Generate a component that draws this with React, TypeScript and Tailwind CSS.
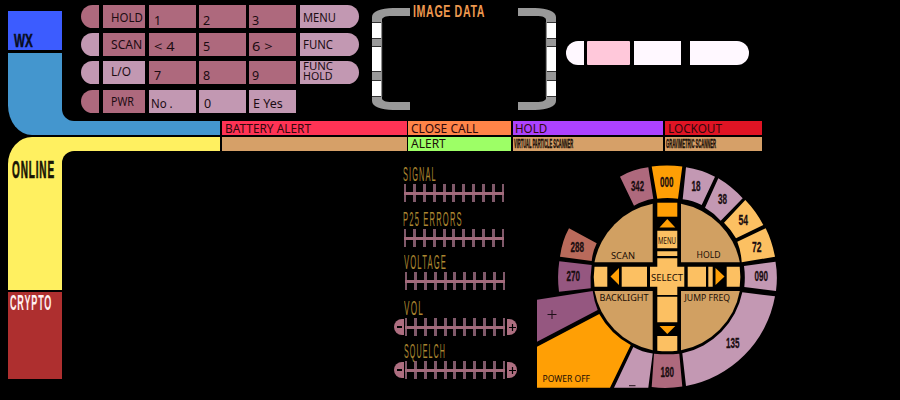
import { useLayoutEffect, useRef, useState } from "react";

const SANS = "font-['Noto_Sans','Open_Sans',sans-serif]";
const NARROW = "font-['Liberation_Sans',Arial,sans-serif]";

// Single line of text squeezed or stretched to a given width.
function Fit({ text, w, className = "" }: { text: string; w: number; className?: string }) {
  const ref = useRef<HTMLSpanElement>(null);
  const [scale, setScale] = useState(1);
  useLayoutEffect(() => {
    if (ref.current) setScale(w / ref.current.offsetWidth);
  }, [w, text]);
  return (
    <span
      ref={ref}
      className={`block w-max origin-left whitespace-pre leading-none ${className}`}
      style={{ transform: `scaleX(${scale})` }}
    >
      {text}
    </span>
  );
}

type Key = { t: string; w: number; pad: string; light?: boolean };
type Row = { h: string; cap: string; label: Key; labelPad: string; numPad: string; keys: Key[]; end?: Key };

const rows: Row[] = [
  {
    h: "mt-[5px]", cap: "bg-[#ae697d]", labelPad: "pt-[6.5px]", numPad: "pt-[9.5px]",
    label: { t: "HOLD", w: 32, pad: "pl-2" },
    keys: [
      { t: "1", w: 7, pad: "pl-[5px]" },
      { t: "2", w: 7, pad: "pl-[4px]" },
      { t: "3", w: 7, pad: "pl-[3px]" },
    ],
    end: { t: "MENU", w: 33, pad: "pl-[3px]" },
  },
  {
    h: "mt-[4.5px]", cap: "bg-[#c298b2]", labelPad: "pt-[6px]", numPad: "pt-[8px]",
    label: { t: "SCAN", w: 31, pad: "pl-2" },
    keys: [
      { t: "< 4", w: 21, pad: "pl-[5px]" },
      { t: "5", w: 7, pad: "pl-[4px]" },
      { t: "6 >", w: 21, pad: "pl-[3px]" },
    ],
    end: { t: "FUNC", w: 30, pad: "pl-[3px]" },
  },
  {
    h: "mt-[5px]", cap: "bg-[#c298b2]", labelPad: "pt-[5.5px]", numPad: "pt-[9.5px]",
    label: { t: "L/O", w: 20, pad: "pl-2", light: true },
    keys: [
      { t: "7", w: 7, pad: "pl-[5px]" },
      { t: "8", w: 7, pad: "pl-[4px]" },
      { t: "9", w: 7, pad: "pl-[3px]" },
    ],
    end: { t: "FUNC|HOLD", w: 30, pad: "pl-[3px]" },
  },
  {
    h: "mt-[6px]", cap: "bg-[#ae697d]", labelPad: "pt-[6.5px]", numPad: "pt-[8.5px]",
    label: { t: "PWR", w: 23, pad: "pl-2" },
    keys: [
      { t: "No .", w: 22, pad: "pl-[2px]", light: true },
      { t: "0", w: 7, pad: "pl-[5px]", light: true },
      { t: "E Yes", w: 30, pad: "pl-[4px]", light: true },
    ],
  },
];

const tone = (light?: boolean) => (light ? "bg-[#c298b2]" : "bg-[#ae697d]");

function EndKey({ k, pad }: { k: Key; pad: string }) {
  const lines = k.t.split("|");
  const two = lines.length > 1;
  return (
    <div className={`ml-1 w-[59px] rounded-r-full bg-[#c298b2] ${k.pad} ${two ? "" : pad}`}>
      {lines.map((l) => (
        <Fit key={l} text={l} w={k.w} className={two ? "text-[11px] !leading-[10px]" : ""} />
      ))}
    </div>
  );
}

function Keypad() {
  return (
    <div className={`ml-[19px] w-[278px] text-[12.5px] text-[#1c0c12] ${SANS}`}>
      {rows.map((r, i) => (
        <div key={i} className={`flex h-[23px] ${r.h}`}>
          <div className={`w-[18px] rounded-l-full ${r.cap}`} />
          <div className={`ml-[3.5px] w-[42px] ${r.label.pad} ${r.labelPad} ${tone(r.label.light)}`}>
            <Fit text={r.label.t} w={r.label.w} />
          </div>
          <div className="ml-[4.5px] flex gap-[3px]">
            {r.keys.map((k) => (
              <div key={k.t} className={`w-[47px] ${k.pad} ${r.numPad} ${tone(k.light)}`}>
                <Fit text={k.t} w={k.w} />
              </div>
            ))}
          </div>
          {r.end && <EndKey k={r.end} pad={r.labelPad} />}
        </div>
      ))}
    </div>
  );
}

function Bracket({ flip }: { flip?: boolean }) {
  return (
    <svg width="38" height="102" viewBox="0 0 38 102" className={flip ? "-scale-x-100" : ""}>
      <path
        d="M38 0H21C9 0 0 3.5 0 9V93C0 98.500 9 102 21 102H38V94H20C13 94 10 92.500 10 90V12C10 9.500 13 8 20 8H38Z"
        fill="#999"
      />
      <path d="M0 14.5H9.300V30.500H0ZM0 39H9.300V63.500H0ZM0 72.500H9.300V88.500H0Z" fill="#fff" />
      <path d="M0 14.500H9.500M0 30.500H9.500M0 38.500H9.500M0 63.500H9.500M0 72.500H9.500M0 88.500H9.500" stroke="#222" strokeWidth=".9" />
      <path d="M9.700 14V89" stroke="#888" strokeWidth="1" />
    </svg>
  );
}

function ImageFrame() {
  return (
    <div className="ml-[13px] flex w-[184px] pt-2">
      <Bracket />
      <div className="w-[108px]">
        <Fit text="IMAGE DATA" w={72} className={`-mt-[5px] ml-[3px] text-[17px] font-bold tracking-[1px] text-[#ed984f] ${NARROW}`} />
      </div>
      <Bracket flip />
    </div>
  );
}

function Pills() {
  return (
    <div className="ml-[10px] flex h-[65px] pt-[41px]">
      <div className="w-[18px] rounded-l-full rounded-r-[2px] bg-[#fff8ff]" />
      <div className="ml-[2.5px] w-[43px] rounded-[1px] bg-[#ffc8da]" />
      <div className="ml-[4.5px] w-[47px] bg-[#fff8ff]" />
      <div className="ml-[9px] w-[59px] rounded-r-full bg-[#fff8ff]" />
    </div>
  );
}

const ticks = [0, 1, 2, 3, 4, 5, 6, 7, 8, 9, 10];

function Meter({ label, w, shift, gap, ends }: { label: string; w: number; shift: string; gap: string; ends?: boolean }) {
  return (
    <div className={`${gap} ${shift}`}>
      <Fit text={label} w={w} className={`ml-[10px] h-[19px] text-[19.5px] tracking-[3px] text-[#ab8630] ${NARROW}`} />
      <div className="flex h-[18px] items-center">
        <div className="mr-[1px] w-[10px]">
          {ends && (
            <div className="flex h-4 items-center justify-center rounded-l-full bg-[#ad6e80]">
              <div className="h-[1.5px] w-[5px] bg-black" />
            </div>
          )}
        </div>
        <div className="flex h-[18px] w-[100px] items-center justify-between bg-[linear-gradient(#a36b7c,#a36b7c)] bg-[length:100%_3px] bg-center bg-no-repeat">
          {ticks.map((t) => (
            <div key={t} className={`h-[18px] bg-[#80596a] ${t === 0 || t === 10 ? "w-[2px]" : "w-[3px]"} flex items-center`}>
              <div className="h-[3px] w-full bg-[#a36b7c]" />
            </div>
          ))}
        </div>
        <div className="ml-[2px] w-[10px]">
          {ends && (
            <div className="flex h-4 items-center justify-center rounded-r-full bg-[#ad6e80]">
              <svg width="7" height="7" viewBox="0 0 7 7">
                <path d="M0 3.5H7M3.5 0V7" stroke="#000" strokeWidth="1.2" />
              </svg>
            </div>
          )}
        </div>
      </div>
    </div>
  );
}

const segments = [
  { f: "#ff9f05", d: "M651.7 166.5Q667 164.5 682.3 166.5L678 198.7Q667 197.5 657.3 198.7Z" },
  { f: "#c398b3", d: "M686 167.3Q701 169.5 715 176.7L701.7 205Q693 200.5 682.7 199.3Z" },
  { f: "#c398b3", d: "M718.3 178.3Q732 186.5 742.7 198.3L720.7 220.7Q714 213 705 207.7Z" },
  { f: "#fcc062", d: "M745.3 200Q756 211 763.3 225L736 238.3Q731 229.5 724 222.7Z" },
  { f: "#fcc062", d: "M765.7 228.3Q772 241 775 256.7L741.7 262.3Q741 251 737.3 241.7Z" },
  { f: "#c398b3", d: "M775.5 261.7Q778 276 776 291L744.3 287Q745.5 276 744 266Z" },
  { f: "#c398b3", d: "M775 296.3A111 111 0 0 1 686 386L682.3 353.3A78 78 0 0 0 742.3 292.3Z" },
  { f: "#ae697d", d: "M654 353.7Q667 355 679.3 353.7L682.3 386.5Q667 389 651.7 387Z" },
  { f: "#c398b3", d: "M633.3 347Q642 352 652.7 353.5L648.3 387.7H614Z" },
  { f: "#ff9f05", d: "M537 346.7L599.3 314A78 78 0 0 0 630.7 345L610 387.7H537Z" },
  { f: "#955780", d: "M537 299.7L592.7 291Q594 301 597.7 310L537 341.7Z" },
  { f: "#955780", d: "M559.3 261.2L591.7 265Q590 277 590.7 288.3L559 291.7Q557 277 559.3 261.2Z" },
  { f: "#b96a5b", d: "M569 228.3L596.7 243.3Q592.5 252 591.7 261L560 256.7Q562 241 569 228.3Z" },
  { f: "#ae697d", d: "M620 176.7Q633 169 648.3 167.3L653.3 198.7Q643 200.5 634 205.7Z" },
  { f: "#d1a062", d: "M652.7 262.3H594.5A74 74 0 0 1 652.7 203.7Z" },
  { f: "#d1a062", d: "M681 262.3H739.8A74 74 0 0 0 681 203.7Z" },
  { f: "#d1a062", d: "M652.7 291H594.5A74 74 0 0 0 652.7 350.3Z" },
  { f: "#d1a062", d: "M681 291H739.8A74 74 0 0 1 681 350.3Z" },
  { f: "#ff9f05", d: "M657.3 202.7H677.3V216.7H657.3Z" },
  { f: "#ff9f05", d: "M667.3 219L675.3 227.5H659.5Z" },
  { f: "#fcc062", d: "M657.3 230.7H677.3V248.3H657.3ZM657.3 251.3H677.3V256H657.3Z" },
  { f: "#fcc062", d: "M657.3 258.3H677.3V266.7H684.3V286.7H677.3V295H657.3V286.7H650V266.7H657.3Z" },
  { f: "#fcc062", d: "M687.7 266.7H706V286.7H687.7ZM708.3 266.7H712.7V286.7H708.3ZM726.7 266.7H739.7Q741 277 739.7 286.7H726.7Z" },
  { f: "#ff9f05", d: "M715.5 268L724.5 276.5L715.5 285Z" },
  { f: "#fcc062", d: "M607.3 266.7H594.5Q593 277 594.5 286.7H607.3ZM621.7 266.7H647V286.7H621.7Z" },
  { f: "#ff9f05", d: "M619 268L610.5 276.5L619 285Z" },
  { f: "#fcc062", d: "M657.3 296.7H677.3V322.3H657.3ZM657.3 336H677.3V350.7Q667 352 657.3 350.7Z" },
  { f: "#ff9f05", d: "M659.5 326H675.3L667.3 334Z" },
];

const bearings = [
  { t: "342", x: 631, y: 190.5, w: 13 },
  { t: "000", x: 660, y: 186.5, w: 13.5 },
  { t: "18", x: 691.5, y: 190.5, w: 9 },
  { t: "38", x: 718, y: 204, w: 9 },
  { t: "54", x: 738.5, y: 225, w: 9.5 },
  { t: "72", x: 752, y: 252, w: 9.5 },
  { t: "288", x: 570.5, y: 252, w: 13.5 },
  { t: "270", x: 566.5, y: 281, w: 13.5 },
  { t: "090", x: 754.5, y: 281, w: 13.5 },
  { t: "135", x: 726, y: 348, w: 13.5 },
  { t: "180", x: 660.5, y: 377, w: 13.5 },
];

const captions = [
  { t: "SCAN", x: 611, y: 259, w: 24 },
  { t: "HOLD", x: 696.5, y: 258, w: 24 },
  { t: "MENU", x: 658, y: 243.5, w: 18 },
  { t: "SELECT", x: 651, y: 280.5, w: 32 },
  { t: "BACKLIGHT", x: 599.5, y: 300.5, w: 49 },
  { t: "JUMP FREQ", x: 684.5, y: 300.5, w: 45.5 },
  { t: "POWER OFF", x: 542.5, y: 382, w: 47.5 },
];

function Dial() {
  return (
    <svg width="244" height="228" viewBox="535 163 244 228">
      {segments.map((s) => (
        <path key={s.d} d={s.d} fill={s.f} />
      ))}
      <path d="M547.5 314.5H556.5M552 310V319M629 385.7H635.5" stroke="#20101a" strokeWidth="1" />
      {bearings.map((b) => (
        <text key={b.t} x={b.x} y={b.y} textLength={b.w} lengthAdjust="spacingAndGlyphs" className={`fill-[#1a0d10] stroke-[#1a0d10] stroke-[0.3] text-[14.5px] font-bold ${NARROW}`}>
          {b.t}
        </text>
      ))}
      {captions.map((c) => (
        <text key={c.t} x={c.x} y={c.y} textLength={c.w} lengthAdjust="spacingAndGlyphs" className={`fill-[#1a0d05] text-[9.5px] ${SANS}`}>
          {c.t}
        </text>
      ))}
    </svg>
  );
}

export default function App() {
  return (
    <div className="h-[400px] w-[900px] overflow-hidden bg-black pl-2">
      <div className="flex h-[121px]">
        <div className="flex h-[106px] w-[54px] flex-col pt-[11px]">
          <div className="h-[39px] bg-[#3c5cff] pl-[6px] pt-[20px]">
            <Fit text="WX" w={19} className={`text-[19px] font-bold text-[#080c20] [-webkit-text-stroke:0.5px] ${NARROW}`} />
          </div>
          <div className="mt-[3px] flex-1 bg-[#4496ce]" />
        </div>
        <div className="flex-1 bg-[linear-gradient(#4496ce,#4496ce)] bg-[length:20px_20px] bg-left-bottom bg-no-repeat">
          <div className="flex h-full rounded-bl-[12px] bg-black">
            <Keypad />
            <ImageFrame />
            <Pills />
          </div>
        </div>
      </div>
      <div className={`-mt-[16px] flex h-[30px] items-end text-[12px] text-[#30080c] ${SANS}`}>
        <div className="flex h-[30px] w-[212px] items-end overflow-hidden rounded-bl-[24px_30px]">
          <div className="h-[30px] w-[54px] bg-[#4496ce]" />
          <div className="h-[14px] flex-1 bg-[#4496ce]" />
        </div>
        <div className="ml-[2px] h-[14px] w-[184.5px] bg-[#ff3355] pl-[3px] pt-[1.5px]">
          <Fit text="BATTERY ALERT" w={86} />
        </div>
        <div className="ml-[1.5px] h-[14px] w-[103px] bg-[#ff8448] pl-[3px] pt-[1.5px]">
          <Fit text="CLOSE CALL" w={67} />
        </div>
        <div className="ml-[1.5px] h-[14px] w-[150px] bg-[#ad42ff] pl-[2px] pt-[1.5px]">
          <Fit text="HOLD" w={32} />
        </div>
        <div className="ml-[2px] h-[14px] w-[97.5px] bg-[#e01424] pl-[3px] pt-[1.5px]">
          <Fit text="LOCKOUT" w={54} />
        </div>
      </div>
      <div className="mt-[2px] flex h-[14px] text-[#1c1008]">
        <div className="h-[30px] w-[54px] rounded-tl-[24px_27px] bg-[#fff060]" />
        <div className="w-[158px] bg-[#fff060]" />
        <div className="ml-[2px] w-[184.5px] bg-[#d6a068]" />
        <div className={`ml-[1.5px] w-[103px] bg-[#9dff66] pl-[3px] pt-[1px] text-[12px] ${SANS}`}>
          <Fit text="ALERT" w={35} />
        </div>
        <div className="ml-[1.5px] w-[150px] bg-[#d6a068] pl-[1px] pt-[1px]">
          <Fit text="VIRTUAL PARTICLE SCANNER" w={59} className={`text-[12.5px] font-bold [-webkit-text-stroke:0.5px] ${NARROW}`} />
        </div>
        <div className="ml-[2px] w-[97.5px] bg-[#d6a068] pl-[1px] pt-[1px]">
          <Fit text="GRAVIMETRIC SCANNER" w={50} className={`text-[12.5px] font-bold [-webkit-text-stroke:0.5px] ${NARROW}`} />
        </div>
      </div>
      <div className="flex h-[249px]">
        <div className="w-[54px] pt-[16px]">
          <div className="flex h-[122.5px] bg-[#fff060] pl-[4px]">
            <Fit text="ONLINE" w={43} className={`-mt-[8.5px] text-[23px] font-bold tracking-[2px] text-[#181404] [-webkit-text-stroke:0.7px] ${NARROW}`} />
          </div>
          <div className="mt-[2.5px] h-[86.5px] bg-[#ae2f2f] pl-[2px]">
            <Fit text="CRYPTO" w={42} className={`text-[22px] font-bold tracking-[2px] text-[#fff0f0] ${NARROW}`} />
          </div>
        </div>
        <div className="flex-1 bg-[linear-gradient(#fff060,#fff060)] bg-[length:20px_20px] bg-no-repeat">
          <div className="flex h-full rounded-tl-[12px] bg-black">
            <div className="ml-[331px] w-[126px] pt-[14px]">
              <Meter label="SIGNAL" w={34} gap="" shift="" />
              <Meter label="P25 ERRORS" w={60} gap="mt-[8px]" shift="" />
              <Meter label="VOLTAGE" w={43} gap="mt-[6px]" shift="pl-[1px]" />
              <Meter label="VOL" w={20} gap="mt-[9px]" shift="pl-[1px]" ends />
              <Meter label="SQUELCH" w={42} gap="mt-[6px]" shift="pl-[1px]" ends />
            </div>
            <div className="ml-[16px] pt-[12px]">
              <Dial />
            </div>
          </div>
        </div>
      </div>
    </div>
  );
}
